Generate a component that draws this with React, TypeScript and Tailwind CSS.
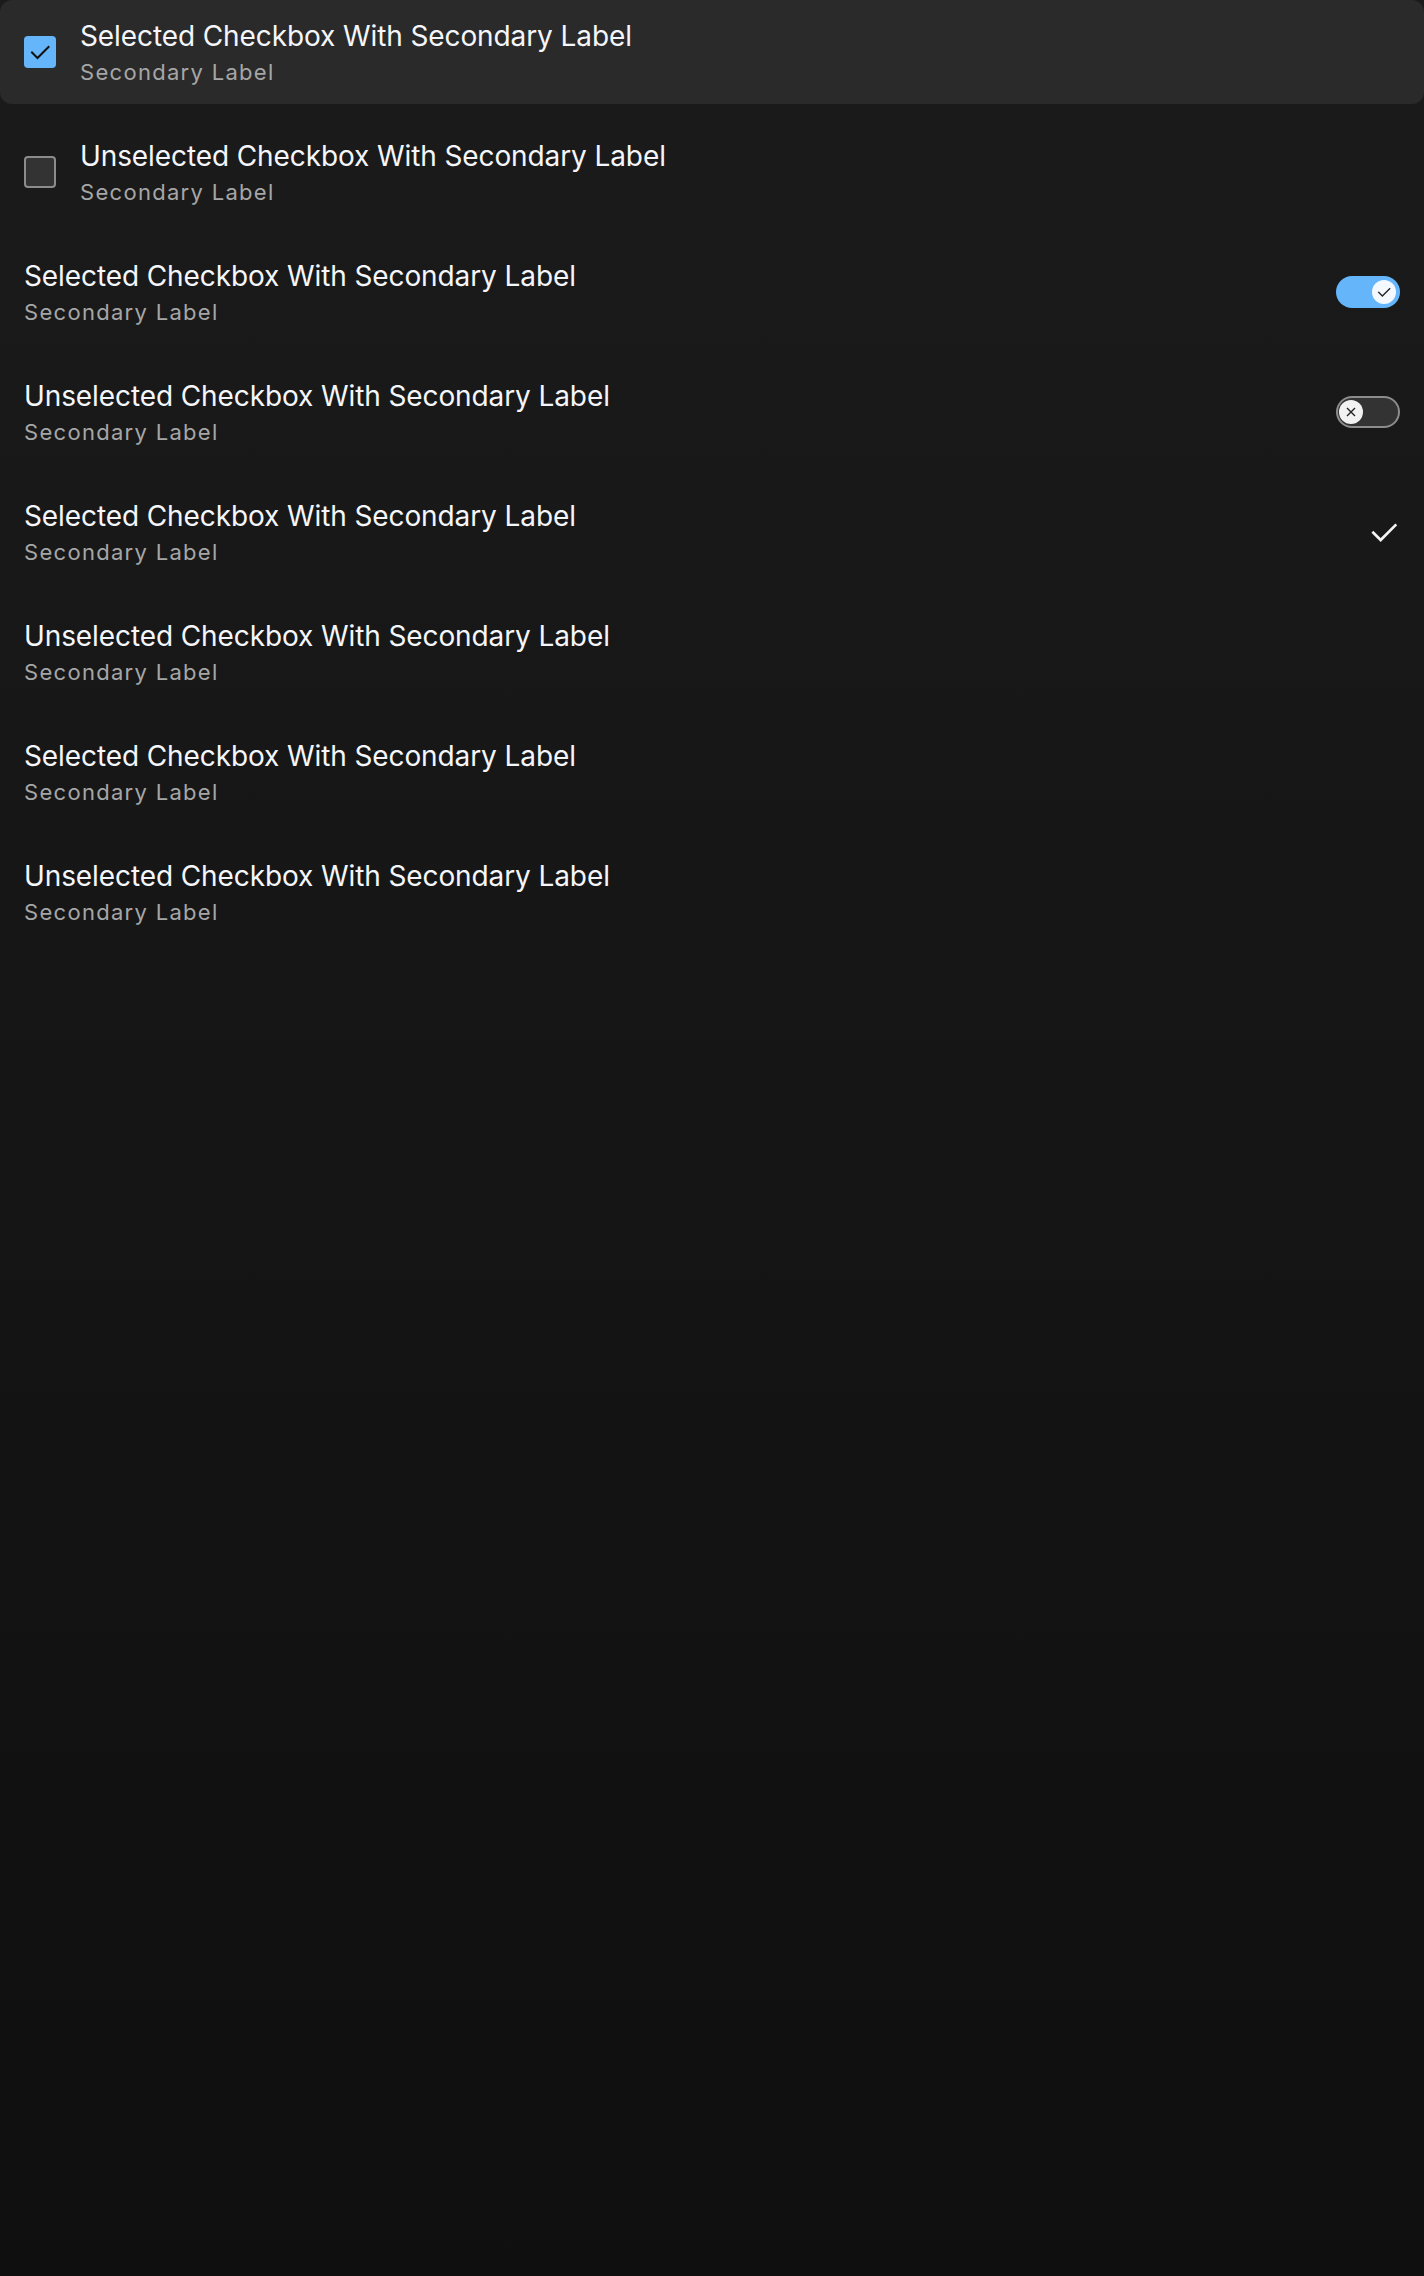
import React from "react";

const font = { fontFamily: "Inter, 'Noto Sans', sans-serif" };

function CheckIcon({ className, stroke }: { className?: string; stroke: string }) {
  return (
    <svg viewBox="0 0 24 24" className={className} fill="none" stroke={stroke} strokeWidth={2} strokeLinecap="square">
      <path d="M4 12.5 L9.5 18 L20.5 7" />
    </svg>
  );
}

function Labels({ primary }: { primary: string }) {
  return (
    <div className="flex flex-col pt-[3px]">
      <span className="text-[28px] leading-[36px] text-[#f4f6fb] tracking-[-0.1px]">{primary}</span>
      <span className="text-[22px] leading-[36px] text-[#a6a6a6] tracking-[1.3px]">Secondary Label</span>
    </div>
  );
}

function Row({ primary, left, right, highlight }: { primary: string; left?: React.ReactNode; right?: React.ReactNode; highlight?: boolean }) {
  return (
    <div className={`flex h-[104px] items-center rounded-[12px] px-6 ${highlight ? "bg-[#2a2a2a]" : ""}`}>
      {left ? <div className="mr-6 flex items-center">{left}</div> : null}
      <div className="flex-1">
        <Labels primary={primary} />
      </div>
      {right ? <div className="flex items-center">{right}</div> : null}
    </div>
  );
}

export default function App() {
  const sel = "Selected Checkbox With Secondary Label";
  const unsel = "Unselected Checkbox With Secondary Label";
  return (
    <div style={font} className="min-h-[2276px] w-full bg-gradient-to-b from-[#1b1b1b] to-[#0f0f0f]">
      <div className="flex flex-col gap-4">
        <Row
          highlight
          primary={sel}
          left={
            <div className="flex h-8 w-8 items-center justify-center rounded-[4px] bg-[#64b5f9]">
              <CheckIcon className="h-6 w-6" stroke="#111" />
            </div>
          }
        />
        <Row
          primary={unsel}
          left={<div className="h-8 w-8 rounded-[4px] border-2 border-[#8c8c8c] bg-[#333333]" />}
        />
        <Row
          primary={sel}
          right={
            <div className="flex h-8 w-16 items-center justify-end rounded-full bg-[#64b5f9] px-1">
              <div className="flex h-6 w-6 items-center justify-center rounded-full bg-[#f4f8ff]">
                <CheckIcon className="h-4 w-4" stroke="#222" />
              </div>
            </div>
          }
        />
        <Row
          primary={unsel}
          right={
            <div className="flex h-8 w-16 items-center rounded-full border-2 border-[#8c8c8c] bg-[#333333] px-[1px]">
              <div className="flex h-6 w-6 items-center justify-center rounded-full bg-[#f2f2f2]">
                <svg viewBox="0 0 24 24" className="h-4 w-4" fill="none" stroke="#222" strokeWidth={2}>
                  <path d="M6 6 L18 18 M18 6 L6 18" />
                </svg>
              </div>
            </div>
          }
        />
        <Row primary={sel} right={<CheckIcon className="h-8 w-8" stroke="#f4f4f4" />} />
        <Row primary={unsel} />
        <Row primary={sel} />
        <Row primary={unsel} />
      </div>
    </div>
  );
}
